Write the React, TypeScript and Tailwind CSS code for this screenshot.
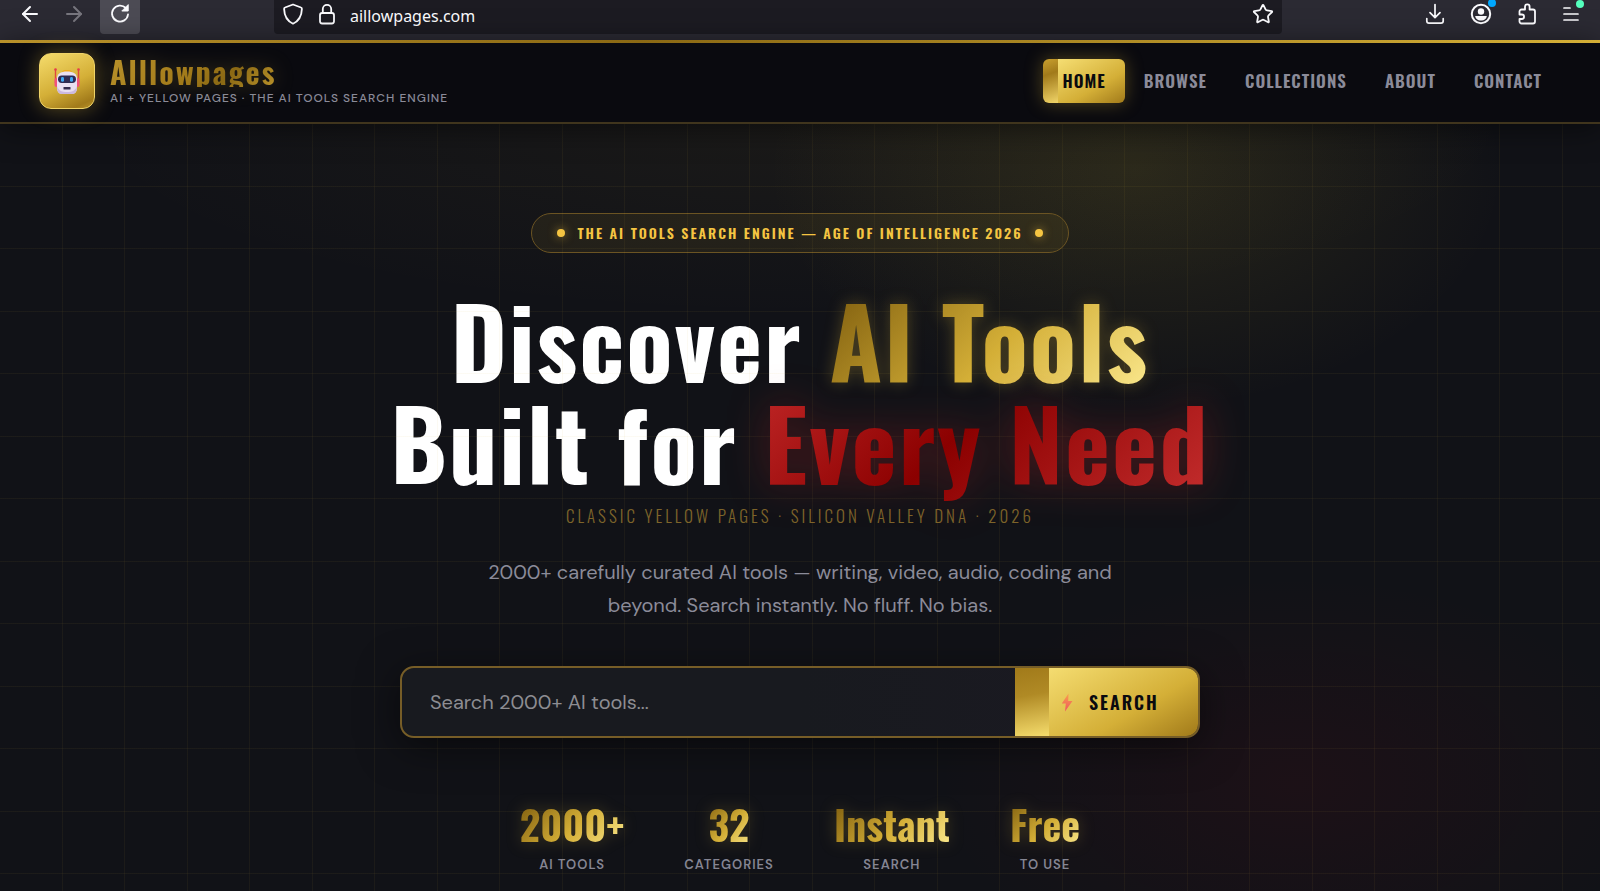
import React from "react";
import { ArrowLeft, ArrowRight, Star } from "lucide-react";

const navLinks = ["Browse", "Collections", "About", "Contact"];

const stats = [
  { value: "2000+", label: "AI Tools" },
  { value: "32", label: "Categories" },
  { value: "Instant", label: "Search" },
  { value: "Free", label: "To Use" },
];

const goldText =
  "bg-[linear-gradient(135deg,#8b6914_12%,#d4af37_54%,#f9e68a_94%)] bg-clip-text text-transparent";

const RobotIcon = () => (
  <svg width="28" height="28" viewBox="0 0 28 28" fill="none" aria-hidden="true">
    <path d="M2.500 3v13M25.500 3v13" stroke="#e0483c" strokeWidth="1.4" />
    <circle cx="2.500" cy="2.500" r="1.300" fill="#e63b4b" />
    <circle cx="25.500" cy="2.500" r="1.300" fill="#e63b4b" />
    <rect x="1.500" y="11" width="4" height="9" rx="2" fill="#f0527a" />
    <rect x="22.500" y="11" width="4" height="9" rx="2" fill="#f0527a" />
    <path d="M9 6c0-2.500 2-3 5-3s5 .5 5 3z" fill="#f0a818" />
    <path d="M4 12c0-5.500 3.500-7.500 10-7.500S24 6.500 24 12v8.500c0 4.500-2 6.500-5.500 6.500h-9C6 27 4 25 4 20.500z" fill="#e9dff2" />
    <path d="M4.200 19c1.300 5 5 6 9.800 6s8.500-1 9.800-6v2c0 4-2 6-5.300 6h-9c-3.300 0-5.300-2-5.300-6z" fill="#ccb9df" />
    <rect x="5" y="8.500" width="18" height="7.500" rx="3.700" fill="#2f2a52" />
    <rect x="8" y="10" width="3" height="4.800" rx="1.400" fill="#3fa9f5" />
    <rect x="17" y="10" width="3" height="4.800" rx="1.400" fill="#3fa9f5" />
    <rect x="10.500" y="20" width="7" height="2.600" rx="0.600" fill="#352b4e" />
  </svg>
);

const ReloadIcon = () => (
  <svg width="22" height="22" viewBox="0 0 22 22" fill="none" stroke="#fbfbfe" strokeWidth="1.800" strokeLinecap="round" strokeLinejoin="round">
    <path d="M19 11.500A8 8 0 1 1 16.800 5" />
    <path d="M19.200 2v6h-6z" fill="#fbfbfe" strokeWidth="1" />
  </svg>
);

const ShieldIcon = () => (
  <svg width="22" height="22" viewBox="0 0 22 22" fill="none" stroke="#fbfbfe" strokeWidth="1.800" strokeLinejoin="round">
    <path d="M11 1.500 19 4.500c.6.200.9.800.9 1.400C19.700 12.500 17 18 11 20.700 5 18 2.300 12.500 2.100 5.900c0-.6.300-1.200.9-1.400z" />
  </svg>
);

const LockIcon = () => (
  <svg width="18" height="22" viewBox="0 0 18 22" fill="none" stroke="#fbfbfe" strokeWidth="1.800">
    <rect x="2" y="10" width="14" height="10.500" rx="2.200" />
    <path d="M4.800 10V6a4.200 4.200 0 0 1 8.400 0v4" />
  </svg>
);

const DownloadIcon = () => (
  <svg width="20" height="22" viewBox="0 0 20 22" fill="none" stroke="#fbfbfe" strokeWidth="1.700" strokeLinecap="round" strokeLinejoin="round">
    <path d="M10 1.500v13M5 9.700l5 5 5-5M1.800 15.500V18a2.200 2.200 0 0 0 2.200 2.200h12a2.200 2.200 0 0 0 2.200-2.200v-2.500" />
  </svg>
);

const AccountIcon = () => (
  <svg width="22" height="22" viewBox="0 0 22 22" fill="none">
    <circle cx="11" cy="11" r="9.200" stroke="#fbfbfe" strokeWidth="2" />
    <circle cx="11" cy="8.500" r="3.200" fill="#fbfbfe" />
    <path d="M5.200 13h11.600c-.3 2.800-2.800 4.600-5.800 4.600S5.500 15.800 5.200 13z" fill="#fbfbfe" />
  </svg>
);

const PuzzleIcon = () => (
  <svg width="20" height="22" viewBox="0 0 20 22" fill="none" stroke="#fbfbfe" strokeWidth="1.800" strokeLinejoin="round">
    <path d="M8 6.500V3.700a2.300 2.300 0 0 1 4.600 0v2.800H16a2 2 0 0 1 2 2v10a2 2 0 0 1-2 2H4.500a2 2 0 0 1-2-2V16h2.300a2.200 2.200 0 0 0 0-4.500H2.500v-3a2 2 0 0 1 2-2z" />
  </svg>
);

const MenuIcon = () => (
  <svg width="18" height="20" viewBox="0 0 18 20" stroke="#fbfbfe" strokeWidth="1.700" strokeLinecap="round">
    <path d="M2 4h6M2 10h14M2 16h14" />
  </svg>
);

const BoltIcon = () => (
  <svg width="12" height="19" viewBox="0 0 12 19" aria-hidden="true">
    <defs>
      <linearGradient id="bolt" x1="0" y1="0" x2="0" y2="1">
        <stop offset="0" stopColor="#f9a04a" />
        <stop offset="1" stopColor="#ee5560" />
      </linearGradient>
    </defs>
    <path d="M7.500.5.800 10.500h4L4 18.500 11.500 8H7.200z" fill="url(#bolt)" />
  </svg>
);

const BrowserBar = () => {
  return (
    <div className="flex h-10 items-start bg-[#2b2a33] pl-4 pr-5">
      <div className="flex h-7 items-center">
        <button type="button" aria-label="Back" className="flex w-7 justify-center text-[#fbfbfe]">
          <ArrowLeft size={24} strokeWidth={2} />
        </button>
        <button type="button" aria-label="Forward" className="ml-4 flex w-7 justify-center text-[#77767e]">
          <ArrowRight size={24} strokeWidth={2} />
        </button>
      </div>
      <button type="button" aria-label="Reload" className="ml-3 flex h-[34px] w-10 justify-center rounded-b bg-[#4c4b54] pt-[3px]">
        <ReloadIcon />
      </button>
      <div className="ml-[134px] flex h-[34px] flex-1 items-start rounded-b bg-[#1c1b22] pl-2 pr-2">
        <div className="flex h-7 flex-1 items-center">
          <ShieldIcon />
          <span className="ml-[14px]">
            <LockIcon />
          </span>
          <input
            type="text"
            aria-label="Address"
            defaultValue="aillowpages.com"
            className="ml-[14px] mt-1 min-w-0 flex-1 bg-transparent font-['Noto_Sans','Open_Sans',sans-serif] text-base leading-6 text-[#fbfbfe] outline-none"
          />
          <button type="button" aria-label="Bookmark" className="text-[#fbfbfe]">
            <Star size={22} strokeWidth={2} />
          </button>
        </div>
      </div>
      <div className="ml-[143px] flex h-7 items-center gap-[25px]">
        <button type="button" aria-label="Downloads">
          <DownloadIcon />
        </button>
        <button type="button" aria-label="Account" className="relative">
          <AccountIcon />
          <span className="absolute -top-1 -right-1 size-2 rounded-full bg-[#00a8ff]"></span>
        </button>
        <button type="button" aria-label="Extensions">
          <PuzzleIcon />
        </button>
        <button type="button" aria-label="Menu" className="relative">
          <MenuIcon />
          <span className="absolute -top-1 -right-1 size-2 rounded-full bg-[#54ffbd]"></span>
        </button>
      </div>
    </div>
  );
};

const Header = () => {
  return (
    <header className="relative z-10 flex h-[84px] items-center justify-between border-b-2 border-[#40351d] bg-[#0a0a0f] px-[39px] shadow-[0_4px_30px_rgba(0,0,0,0.5)]">
      <div className="absolute inset-x-0 top-0 h-[3px] bg-[linear-gradient(90deg,#b8912a_0%,#8b6914_40%,#d4af37_100%)]"></div>
      <a href="#" className="flex items-center gap-[15px]">
        <span className="flex size-14 items-center justify-center rounded-xl border border-[#f0d468] bg-[linear-gradient(155deg,#f5dc6c_0%,#d4af37_55%,#a17a1a_88%,#b8922a_100%)] shadow-[0_0_20px_rgba(212,175,55,0.4)]">
          <RobotIcon />
        </span>
        <span className="flex flex-col">
          <span className="self-start bg-[linear-gradient(135deg,#b8912a_0%,#a17a1a_50%,#8b6914_70%,#b8912a_100%)] bg-clip-text font-['Oswald',sans-serif] text-[30px] leading-[30px] font-bold tracking-[2px] text-transparent drop-shadow-[0_0_10px_rgba(212,175,55,0.25)]">
            Alllowpages
          </span>
          <span className="mt-[3px] font-['DM_Sans',sans-serif] text-xs leading-4 font-medium tracking-[1px] text-[#8b8b99] uppercase">
            AI + Yellow Pages · The AI Tools Search Engine
          </span>
        </span>
      </a>
      <nav className="flex font-['Oswald',sans-serif] text-[17px] leading-6 font-semibold tracking-[1px] text-[#8b8b99] uppercase">
        <a
          href="#"
          className="rounded-md bg-[linear-gradient(160deg,#c9a02f_0%,#a17a1a_35%,#f0d468_100%),linear-gradient(150deg,#fbe67d_0%,#d4af37_65%,#a17a1a_100%)] bg-[length:15px_100%,100%_100%] bg-no-repeat px-[19px] py-[10px] text-[#0a0a0f] shadow-[0_0_18px_rgba(212,175,55,0.35)]"
        >
          Home
        </a>
        {navLinks.map((link) => (
          <a key={link} href="#" className="px-[19px] py-[10px]">
            {link}
          </a>
        ))}
      </nav>
    </header>
  );
};

const App = () => {
  return (
    <div className="flex min-h-screen flex-col bg-[#111217]">
      <BrowserBar />
      <Header />
      <main className="relative flex flex-1 flex-col items-center bg-[radial-gradient(ellipse_460px_300px_at_71%_6%,rgba(200,180,50,0.12),transparent_80%),radial-gradient(ellipse_900px_240px_at_50%_0%,rgba(212,175,55,0.05),transparent_80%),radial-gradient(ellipse_400px_230px_at_81%_86%,rgba(160,0,20,0.08),transparent_90%)] pt-[89px] pb-4">
        <div className="pointer-events-none absolute inset-0 bg-[linear-gradient(90deg,transparent_62px,rgba(212,175,55,0.06)_62px,rgba(212,175,55,0.06)_63px,transparent_63px,transparent_124px,rgba(212,175,55,0.06)_124px),linear-gradient(180deg,transparent_62px,rgba(212,175,55,0.06)_62px,rgba(212,175,55,0.06)_63px,transparent_63px,transparent_124px,rgba(212,175,55,0.06)_124px)] bg-[length:125px_125px]"></div>

        <p className="flex h-10 items-center gap-3 rounded-full border border-[#6b5423] bg-[#d4af37]/8 px-[25px] font-['Oswald',sans-serif] text-sm leading-5 font-semibold tracking-[2px] text-[#f5c542] uppercase">
          <span className="size-2 rounded-full bg-[#f5c542] shadow-[0_0_10px_rgba(245,197,66,0.6)]"></span>
          The AI Tools Search Engine — Age of Intelligence 2026
          <span className="size-2 rounded-full bg-[#f5c542] shadow-[0_0_10px_rgba(245,197,66,0.6)]"></span>
        </p>

        <h1 className="mt-9 text-center font-['Oswald',sans-serif] text-8xl leading-[102px] font-bold tracking-[2px] text-white">
          Discover{" "}
          <span className={`${goldText} drop-shadow-[0_0_8px_rgba(212,175,55,0.3)]`}>AI Tools</span>
          <br />
          Built for{" "}
          <span className="bg-[linear-gradient(135deg,#c22828_0%,#8b0000_44%,#c62f2f_100%)] bg-clip-text text-transparent drop-shadow-[0_0_20px_rgba(178,34,34,0.4)]">
            Every Need
          </span>
        </h1>
        <p className="mt-[11px] font-['Oswald',sans-serif] text-[17px] leading-6 font-[350] tracking-[3px] text-[#7d642a] uppercase">
          Classic Yellow Pages · Silicon Valley DNA · 2026
        </p>

        <p className="mt-7 max-w-[640px] text-center font-['DM_Sans',sans-serif] text-xl leading-[33px] text-[#8b8b99]">
          2000+ carefully curated AI tools — writing, video, audio, coding and beyond. Search instantly. No fluff. No bias.
        </p>

        <form
          className="relative mt-11 flex h-[72px] w-full max-w-[800px] overflow-hidden rounded-[14px] border-2 border-[#765d27] bg-[linear-gradient(90deg,#181a1f_50%,#1b1922_100%)] shadow-[0_8px_40px_rgba(0,0,0,0.5)]"
          onSubmit={(e) => e.preventDefault()}
        >
          <input
            type="text"
            aria-label="Search AI tools"
            placeholder="Search 2000+ AI tools..."
            className="min-w-0 flex-1 bg-transparent px-7 font-['DM_Sans',sans-serif] text-xl text-white outline-none placeholder:text-[#8d8d92]"
          />
          <button
            type="submit"
            className="flex w-[183px] items-center gap-4 bg-[linear-gradient(170deg,#a17a1a_0%,#b08a25_40%,#f5dc6c_100%),linear-gradient(150deg,#fbe67d_0%,#d4af37_65%,#a17a1a_100%)] bg-[length:34px_100%,100%_100%] bg-no-repeat pl-[46px] font-['Oswald',sans-serif] text-lg font-semibold tracking-[2px] text-[#0a0a0f] uppercase"
          >
            <BoltIcon />
            Search
          </button>
        </form>

        <dl className="mt-14 flex gap-[60px]">
          {stats.map((stat) => (
            <div key={stat.label} className="flex flex-col-reverse items-center">
              <dt className="mt-px font-['DM_Sans',sans-serif] text-[13px] leading-5 font-semibold tracking-[1px] text-[#858593] uppercase">
                {stat.label}
              </dt>
              <dd
                className={`${goldText} font-['Oswald',sans-serif] text-[40px] leading-[60px] font-bold drop-shadow-[0_0_8px_rgba(212,175,55,0.25)]`}
              >
                {stat.value}
              </dd>
            </div>
          ))}
        </dl>
      </main>
    </div>
  );
};

export default App;
